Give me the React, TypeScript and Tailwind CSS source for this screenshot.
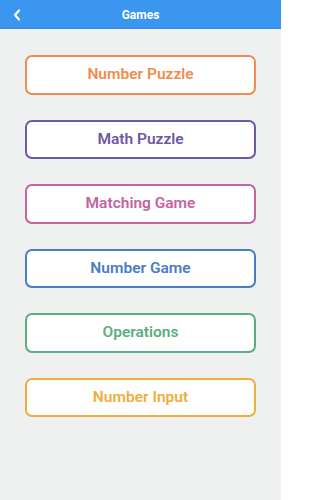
import React from "react";

// 游戏列表页：顶部标题栏 + 彩色描边按钮
const games = [
  { label: "Number Puzzle", cls: "border-[#ef8c4f] text-[#ef8c4f]" },
  { label: "Math Puzzle", cls: "border-[#6f57a6] text-[#6f57a6]" },
  { label: "Matching Game", cls: "border-[#c4639e] text-[#c4639e]" },
  { label: "Number Game", cls: "border-[#4a7cc2] text-[#4a7cc2]" },
  { label: "Operations", cls: "border-[#5aae80] text-[#5aae80]" },
  { label: "Number Input", cls: "border-[#efae3c] text-[#efae3c]" },
];

export default function App() {
  return (
    <div
      className="min-h-[500px] w-[281px] bg-[#eff1f1]"
      style={{ fontFamily: "Roboto, 'Noto Sans', sans-serif" }}
    >
      <header className="relative flex h-[29px] items-center justify-center bg-[#3a96ee] border-b border-[#3689d8]">
        <button className="absolute left-[12px] top-[8px] h-[14px] w-[9px] text-white">
          <svg width="9" height="14" viewBox="0 0 9 14" fill="none">
            <path
              d="M7 2.5L3 7L7 11.5"
              stroke="white"
              strokeWidth="2.2"
              strokeLinecap="round"
              strokeLinejoin="round"
            />
          </svg>
        </button>
        <h1 className="pt-[1px] text-[12px] font-bold text-white">Games</h1>
      </header>

      <div className="flex flex-col gap-[25px] px-[25px] pt-[26px]">
        {games.map((g) => (
          <button
            key={g.label}
            className={`flex h-[39.5px] w-full items-center justify-center rounded-[7px] border-2 bg-white text-[15.5px] font-semibold ${g.cls}`}
          >
            {g.label}
          </button>
        ))}
      </div>
    </div>
  );
}
